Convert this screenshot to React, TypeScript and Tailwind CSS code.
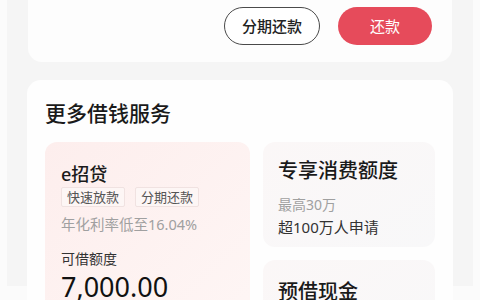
import React from "react";

const font = { fontFamily: '"Noto Sans", "Noto Sans CJK SC", sans-serif' };

export default function App() {
  return (
    <div className="w-[480px] h-[300px] overflow-hidden bg-[#fbfbfb]" style={font}>
      <div className="mx-[7px] h-full bg-[#f5f5f5] px-[21px]">
        {/* top card */}
        <div className="-mt-[14px] rounded-[14px] bg-[#fdfdfd] pt-[21px] pb-[17px] pr-[20px] flex justify-end gap-[18px]">
          <button className="w-[96px] h-[38px] rounded-full border border-[#4a4a4a] bg-white text-[15px] leading-none font-medium text-[#222] flex items-center justify-center">
            分期还款
          </button>
          <button className="w-[94px] h-[38px] rounded-full bg-[#e64b5b] text-[15px] leading-none text-white flex items-center justify-center">
            还款
          </button>
        </div>

        {/* services card */}
        <div className="mt-[18px] -mx-[1px] rounded-[14px] bg-[#fefefe] px-[18px] pt-[19px] pb-[20px]">
          <div className="text-[21px] leading-[28px] font-medium text-[#1a1a1a]">更多借钱服务</div>
          <div className="mt-[15px] flex gap-[13px]">
            <div className="w-[205px] h-[200px] rounded-[12px] bg-gradient-to-br from-[#fdeeed] to-[#fef6f5] px-[16px] pt-[20px]">
              <div className="text-[18px] leading-[24px] font-medium text-[#1a1a1a]">e招贷</div>
              <div className="mt-[1px] flex gap-[10px]">
                <span className="h-[20px] px-[5px] flex items-center rounded-[2px] border border-[#f0e2e1] bg-[#fdf6f5] text-[13px] leading-none text-[#555]">
                  快速放款
                </span>
                <span className="h-[20px] px-[5px] flex items-center rounded-[2px] border border-[#f0e2e1] bg-[#fdf6f5] text-[13px] leading-none text-[#555]">
                  分期还款
                </span>
              </div>
              <div className="mt-[8px] text-[14.5px] leading-[18px] text-[#a0a0a0]">年化利率低至16.04%</div>
              <div className="mt-[16px] text-[14px] leading-[20px] text-[#333]">可借额度</div>
              <div className="mt-[1px] text-[27px] leading-[34px] text-[#111]">7,000.00</div>
            </div>
            <div className="flex-1 flex flex-col gap-[13px]">
              <div className="h-[105px] rounded-[12px] bg-gradient-to-br from-[#fbf7f7] to-[#f8f8f9] pl-[15px] pt-[16px]">
                <div className="text-[20px] leading-[26px] font-medium text-[#1a1a1a]">专享消费额度</div>
                <div className="mt-[12px] text-[14px] leading-[18px] text-[#a0a0a0]">最高30万</div>
                <div className="mt-[3px] text-[15px] leading-[20px] text-[#333]">超100万人申请</div>
              </div>
              <div className="h-[105px] rounded-[12px] bg-gradient-to-br from-[#fbf7f7] to-[#f8f8f9] pl-[15px] pt-[19px]">
                <div className="text-[20px] leading-[26px] font-medium text-[#1a1a1a]">预借现金</div>
              </div>
            </div>
          </div>
        </div>
      </div>
    </div>
  );
}
